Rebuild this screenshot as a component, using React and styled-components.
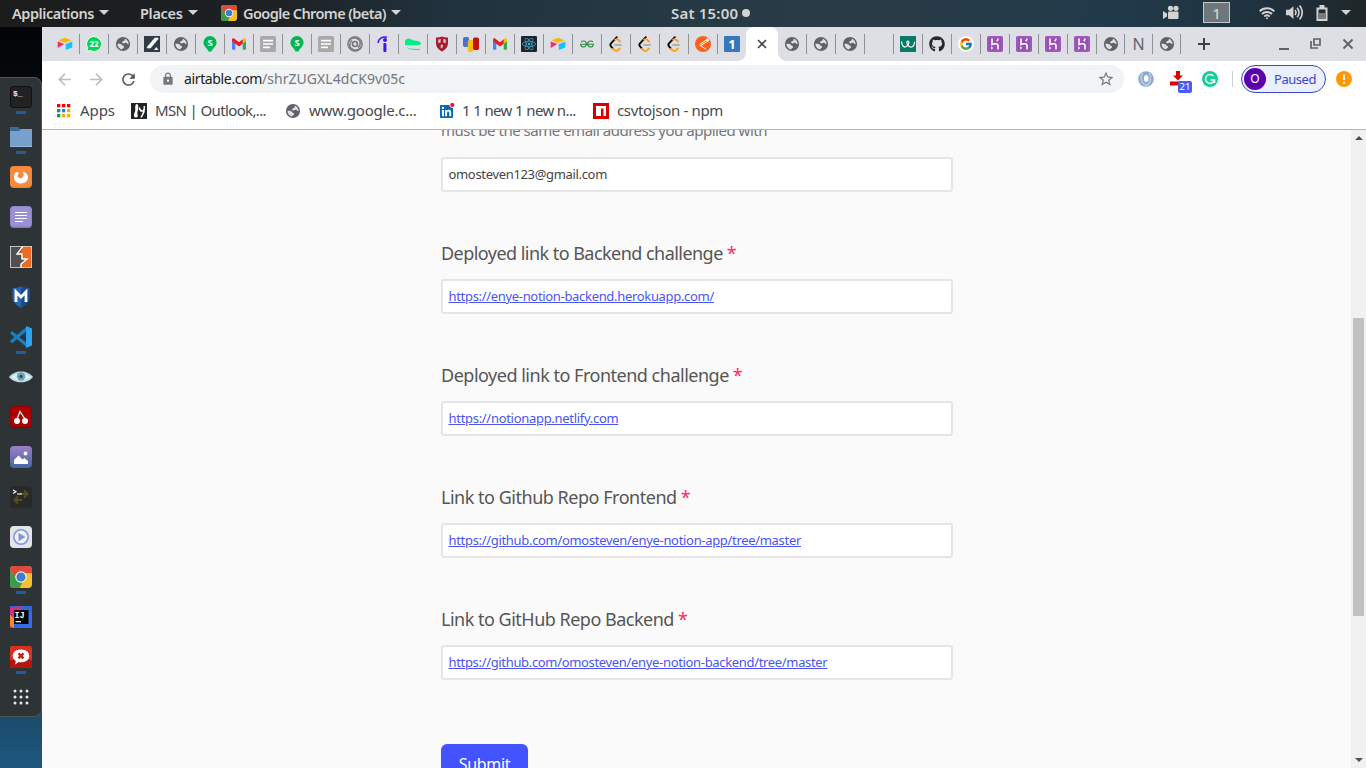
import React from 'react';
import styled, { createGlobalStyle } from 'styled-components';
import { MdLock, MdRefresh, MdStarBorder, MdArrowBack, MdArrowForward } from 'react-icons/md';
import { FaGithub, FaReact, FaLinkedin } from 'react-icons/fa';
import { FcGoogle } from 'react-icons/fc';
import { SiGeeksforgeeks } from 'react-icons/si';

const Global = createGlobalStyle`
  * { box-sizing: border-box; }
  html, body { margin: 0; height: 100%; overflow: hidden; }
  body { font-family: "Noto Sans", "Open Sans", sans-serif; background: #000; }
  svg { display: block; flex: none; }
`;

const Desktop = styled.div`
  width: 1366px;
  height: 768px;
  display: flex;
  flex-direction: column;
  overflow: hidden;
`;

const Text = styled.span`
  white-space: pre;
  letter-spacing: ${(p) => p.$ls || 0}px;
`;

/* ---------- top bar ---------- */
const TopBar = styled.header`
  height: 27px;
  flex: none;
  display: flex;
  align-items: center;
  padding-bottom: 2px;
  color: #d3d3d1;
  font-size: 14.5px;
  font-weight: 600;
  background: linear-gradient(100deg, #1c1c1c 0, #1d2124 270px, #20323e 440px, #263a45 700px, #293b46 860px, #213a4a 1100px, #1f3340 1230px, #202426 1366px);
`;
const TopMenu = styled.div`
  display: flex;
  align-items: center;
  gap: 6px;
  width: ${(p) => p.$w}px;
  padding-left: ${(p) => p.$pl || 0}px;
`;
const Caret = styled.i`
  border: 5px solid transparent;
  border-top-color: currentColor;
  border-bottom: 0;
  margin-left: ${(p) => p.$ml || 0}px;
`;
const Clock = styled.div`
  display: flex;
  align-items: center;
  gap: 4px;
  margin-left: 270px;
  flex: 1;
  font-size: 15px;
`;
const Dot = styled.i`
  width: 8px;
  height: 8px;
  border-radius: 50%;
  background: currentColor;
`;
const Tray = styled.div`
  display: flex;
  align-items: center;
  padding-right: 15px;
`;
const Workspace = styled.div`
  width: 27px;
  height: 21px;
  margin: 0 29px 0 24px;
  border: 1px solid #c4c8ca;
  background: #6d777c;
  display: flex;
  align-items: center;
  justify-content: center;
  font-weight: 500;
  font-size: 15px;
`;
const Status = styled.div`
  display: flex;
  align-items: center;
  gap: 11px;
`;

/* ---------- dock ---------- */
const Body = styled.div`
  flex: 1;
  display: flex;
  min-height: 0;
`;
const DockColumn = styled.aside`
  width: 42px;
  flex: none;
  padding-top: 50px;
  background: linear-gradient(#020507 0, #04080b 55px, #1c4c6b 690px, #1d5780 741px);
`;
const Dock = styled.nav`
  height: 640px;
  background: #2e3436;
  border: 1px solid #4e5355;
  border-left: 0;
  border-radius: 0 8px 8px 0;
  display: flex;
  flex-direction: column;
`;
const DockItem = styled.div`
  height: 40px;
  flex: none;
  padding-top: 8px;
  display: flex;
  flex-direction: column;
  align-items: center;
  gap: 3px;
`;
const Running = styled.i`
  width: 10px;
  height: 3px;
  background: #215d9c;
`;

/* ---------- browser ---------- */
const Browser = styled.main`
  flex: 1;
  min-width: 0;
  display: flex;
  flex-direction: column;
  background: #fff;
`;
const TabStrip = styled.div`
  height: 34px;
  flex: none;
  display: flex;
  align-items: center;
  padding-left: 9px;
  background: #dedfe5;
  color: #5f6368;
`;
const Tab = styled.div`
  width: ${(p) => p.$w || 29}px;
  height: 20px;
  flex: none;
  display: flex;
  align-items: center;
  justify-content: center;
  border-right: 1px solid ${(p) => (p.$last ? 'transparent' : '#8e9196')};
  font-size: 16px;
`;
const ActiveTab = styled.div`
  width: 32px;
  height: 34px;
  flex: none;
  margin-left: -1px;
  border-radius: 8px 8px 0 0;
  background: #fff;
  display: flex;
  align-items: center;
  justify-content: center;
  position: relative;
  &::before, &::after {
    content: '';
    position: absolute;
    bottom: 0;
    width: 8px;
    height: 8px;
  }
  &::before { left: -8px; background: radial-gradient(circle at 0 0, transparent 7.5px, #fff 8px); }
  &::after { right: -8px; background: radial-gradient(circle at 100% 0, transparent 7.5px, #fff 8px); }
`;
const NewTab = styled.div`
  width: 45px;
  display: flex;
  justify-content: center;
`;
const WindowButtons = styled.div`
  flex: 1;
  display: flex;
  align-items: center;
  justify-content: flex-end;
  padding-right: 12px;
  gap: 20px;
`;
const Toolbar = styled.div`
  height: 36px;
  flex: none;
  display: flex;
  align-items: center;
  color: #5f6368;
  padding-left: 13px;
`;
const NavButton = styled.div`
  width: 32px;
  display: flex;
  align-items: center;
  justify-content: flex-start;
  color: ${(p) => (p.$off ? '#babcbe' : '#53575b')};
`;
const Omnibox = styled.div`
  width: 974px;
  height: 28px;
  flex: none;
  margin-left: -1px;
  border-radius: 14px;
  background: #f1f3f4;
  display: flex;
  align-items: center;
  padding: 0 9px 0 11px;
  font-size: 14px;
  color: #74787c;
  svg:first-child { margin-right: 9px; }
  svg:last-child { margin-left: auto; }
  span, b { padding-bottom: 1px; }
  b { font-weight: 400; color: #202124; }
`;
const Extensions = styled.div`
  display: flex;
  align-items: center;
  padding-left: 14px;
  gap: 16px;
`;
const Badged = styled.div`
  position: relative;
`;
const Badge = styled.span`
  position: absolute;
  left: 8px;
  top: 10px;
  width: 14px;
  height: 12px;
  border-radius: 2px;
  background: #4a5af5;
  color: #fff;
  font-size: 9.5px;
  line-height: 12px;
  text-align: center;
`;
const Divider = styled.i`
  width: 1px;
  height: 16px;
  margin-left: 14px;
  background: #cdd0d3;
`;
const Profile = styled.div`
  width: 85px;
  height: 28px;
  margin: 0 10px 0 8px;
  border: 1px solid #3b48cf;
  border-radius: 14px;
  background: #e9effb;
  color: #3c46c8;
  display: flex;
  align-items: center;
  padding-left: 2px;
  gap: 8px;
  font-size: 13px;
`;
const Avatar = styled.span`
  width: 22px;
  height: 22px;
  border-radius: 50%;
  background: #5b00ab;
  color: #fff;
  font-size: 12px;
  line-height: 21px;
  text-align: center;
`;
const Bookmarks = styled.div`
  height: 33px;
  flex: none;
  display: flex;
  align-items: center;
  padding: 0 0 5px 15px;
  border-bottom: 1px solid #b6b6b6;
  font-size: 15px;
  color: #46494d;
  ${Text} { padding-bottom: 1px; }
`;
const Bookmark = styled.div`
  display: flex;
  align-items: center;
  gap: ${(p) => p.$gap || 8}px;
  width: ${(p) => p.$w}px;
`;

/* ---------- form ---------- */
const Page = styled.div`
  flex: 1;
  min-height: 0;
  display: flex;
  background: #fafafa;
`;
const Form = styled.section`
  flex: 1;
  height: 638px;
  overflow: hidden;
  padding-left: 399px;
`;
const Hint = styled.div`
  height: 27px;
  margin-top: -11px;
  margin-bottom: 11px;
  line-height: 22px;
  font-size: 15px;
  color: #757575;
`;
const Field = styled.div`
  width: 512px;
  padding-bottom: 44px;
`;
const Label = styled.div`
  height: 43px;
  line-height: 34px;
  font-size: 18px;
  color: #555;
`;
const Star = styled.span`
  color: #f82b60;
  margin-left: 4px;
`;
const Input = styled.div`
  height: 35px;
  border: 2px solid #e5e5e5;
  border-radius: 3px;
  background: #fff;
  padding-left: 5.5px;
  line-height: 31px;
  font-size: 13px;
  color: #444;
`;
const Link = styled(Text)`
  color: #4a55f0;
  text-decoration: underline;
`;
const Submit = styled.button`
  display: block;
  width: 87px;
  height: 40px;
  margin-top: 20px;
  padding: 0;
  border: 0;
  border-radius: 6px;
  background: #4353ff;
  color: #fff;
  font: 16px/38px "Noto Sans", sans-serif;
`;
const Scrollbar = styled.div`
  width: 15px;
  background: #f1f1f1;
  display: flex;
  flex-direction: column;
  align-items: center;
  justify-content: space-between;
  padding: 4px 0;
`;
const Thumb = styled.i`
  width: 11px;
  height: 298px;
  background: #c1c1c1;
  margin-bottom: -36px;
`;

/* ---------- icons ---------- */
const Svg = ({ s = 16, children, v = 16, ...r }) => (
  <svg width={s} height={s} viewBox={`0 0 ${v} ${v}`} {...r}>{children}</svg>
);
const Globe = () => (
  <Svg>
    <circle cx="8" cy="8" r="7.100" fill="#5f6368" />
    <path d="M9.800 2.700c1.800.6 3.100 2 3.600 3.800l.1 1.800c-1 .1-1.400-.6-1.800-1.200-.5-.6-1.400-.3-2 0-.9.500-2.200.4-2.500-.6-.2-.9.500-1.400 1.300-1.500.8-.1 1.200-.5 1.200-1.200z" fill="#dedfe5" />
    <path d="M2.400 7.800c1.500.2 3-.2 4.200.7.8.6.8 1.300 1.700 1.500.9.200 1 .9.600 1.500-.5.700-1.500.6-1.700 2-2.500-.3-4.700-2.500-4.800-5.700z" fill="#dedfe5" />
  </Svg>
);
const Airtable = () => (
  <Svg>
    <path d="M1.500 4.200 8 1.700l6.500 2.500L8 6.800z" fill="#fcb400" />
    <path d="M8.800 8 15.300 5.500v6L8.800 14z" fill="#18bfff" />
    <path d="M.7 5.600 7.200 8 .7 12z" fill="#f82b60" />
  </Svg>
);
const WhatsApp = () => (
  <Svg>
    <path d="M8 .3a7.700 7.700 0 1 1-3.800 14.400L.4 15.700l1-3.800A7.700 7.700 0 0 1 8 .3z" fill="#fff" />
    <path d="M8 1a7 7 0 1 1-3.700 12.900l-2.900.8.8-2.900A7 7 0 0 1 8 1z" fill="#00d757" />
    <text x="8" y="11" textAnchor="middle" fontSize="8" fontWeight="700" fill="#fff">22</text>
  </Svg>
);
const Pencil = () => (
  <Svg>
    <rect width="16" height="16" fill="#2f3c43" />
    <path d="M10.800 2h2.900c.6 0 .6.600.3 1L6.500 12H3.600c-.6 0-.7-.5-.4-.9z" fill="#fff" stroke="#fff" strokeWidth=".6" />
    <path d="M10 14 12.300 11l2.200 3z" fill="#fff" />
  </Svg>
);
const SPin = () => (
  <Svg>
    <path d="M8 0a6.600 6.600 0 0 1 6.600 6.600C14.600 10.500 10.600 12.500 9.500 15.400H6.500C5.400 12.500 1.400 10.500 1.400 6.600A6.600 6.600 0 0 1 8 0z" fill="#00b851" />
    <text x="8" y="9.800" textAnchor="middle" fontSize="9.500" fontWeight="700" fill="#fff">S</text>
  </Svg>
);
const Gmail = () => (
  <Svg>
    <path d="M1 3.500 4.300 6v7.700H2a1 1 0 0 1-1-1z" fill="#4285f4" />
    <path d="M15 3.500 11.700 6v7.700H14a1 1 0 0 0 1-1z" fill="#34a853" />
    <path d="M11.700 3.300 13 2.500c1-.6 2 .1 2 1.200v1.500l-3.300 2.500z" fill="#fbbc04" />
    <path d="M1 3.700C1 2.500 2.200 1.900 3.100 2.600L8 6.200l3.700-2.900v4.400L8 10.400 1 5.200z" fill="#ea1c2c" />
  </Svg>
);
const Doc = () => (
  <Svg>
    <rect width="16" height="16" rx="1.500" fill="#a9a9a9" />
    <path d="M3 4.700h10M3 8h10M3 11.300h7" stroke="#fff" strokeWidth="1.700" />
  </Svg>
);
const Swirl = () => (
  <Svg fill="none" stroke="#777">
    <circle cx="8" cy="8" r="7" strokeWidth="1.800" stroke="#888" />
    <path d="M2 5a6 5 20 0 1 10-1M14 11a6 5 20 0 1-10 1M11 2.500c3 2 3 7 0 9M5 13.500c-3-2-3-7 0-9" strokeWidth="1.500" />
    <circle cx="8" cy="8" r="2.500" strokeWidth="1.600" />
  </Svg>
);
const Indeed = () => (
  <Svg>
    <circle cx="9" cy="4" r="2" fill="#4310ee" />
    <rect x="7.400" y="7" width="3" height="9" rx="1" fill="#4310ee" />
    <path d="M2 7C2.500 3 6 0 11 1.200" fill="none" stroke="#4310ee" strokeWidth="1.500" />
  </Svg>
);
const Croc = () => (
  <Svg>
    <path d="M0 8.800V5C1 2.500 4 2 6 3.200c2 1.300 4 1.300 6.500 1.800 2.500.5 3.500 1.500 3.500 3 0 1-4 1.300-8 1.300S1 9.500 0 8.800z" fill="#00ef85" />
    <path d="M1 11c4 2 9 2.200 14 1.700v1c-5 .8-10 .3-14-2.700z" fill="#00ef85" />
  </Svg>
);
const Shield = () => (
  <Svg>
    <path d="M2 1.500c2 0 4-.2 6-1 2 .8 4 1 6 1V7c0 4-2.500 6.500-6 8.500C4.500 13.500 2 11 2 7z" fill="#a51c30" />
    <path d="M4.200 3.500v3.700l2.500-.6V3zM9.300 3v3.600l2.500.6V3.500zM6.700 9v3.600L9 11V8.500z" fill="#e3b9be" />
    <path d="M3 9 8 6.500 13 9" stroke="#a51c30" fill="none" />
  </Svg>
);
const Bars = () => (
  <Svg>
    <rect x="0" y="1" width="6" height="10" rx="1.800" fill="#4872cb" />
    <rect x="4.800" y="4" width="5.400" height="12" rx="1.800" fill="#fdbb12" />
    <rect x="10" y="1.500" width="6" height="12.500" rx="1.800" fill="#c3120c" />
  </Svg>
);
const ReactIcon = () => (
  <Svg>
    <rect width="16" height="16" rx="1" fill="#20232a" />
    <FaReact x="1" y="1" size={14} color="#43b6d6" />
  </Svg>
);
const Leet = () => (
  <Svg fill="none" strokeLinecap="round" strokeWidth="1.900">
    <path d="M7 9h6" stroke="#b3b1b0" />
    <path d="M8.800 1.200 3 7.300c-.8.900-.8 2.200 0 3.100l2 2.200" stroke="#070706" />
    <path d="M5 12.600 6.600 14.200c1 .9 2.500.9 3.500 0l1.700-1.700M12 5.500l-1.800-1.700c-.9-.8-2.100-.8-3-.2" stroke="#ffa116" />
  </Svg>
);
const Postman = () => (
  <Svg>
    <circle cx="8" cy="8" r="8" fill="#ff6118" />
    <path d="M12 3.500 5 8.300M12.800 5 6 9.500M4.500 9l6.500 4.300" stroke="#fff" strokeWidth="1" fill="none" />
    <circle cx="12.600" cy="3.900" r="1.600" fill="#fff" />
  </Svg>
);
const One = () => (
  <Svg>
    <rect width="16" height="16" rx="1" fill="#3578c0" />
    <text x="8" y="12.800" textAnchor="middle" fontSize="13" fontWeight="700" fill="#fff">1</text>
  </Svg>
);
const Wave = () => (
  <Svg>
    <rect width="16" height="16" fill="#087a68" />
    <path d="M1.500 5.500c.3 3.500 1.800 5.800 3.800 5.500 2-.4 3.500-2.800 3.600-4.600 0-1.900-2.100-1.900-2 0 .1 2 1.600 4.300 3.600 4.600 2.200.3 4-1.700 4.100-5.300" fill="none" stroke="#fff" strokeWidth="1.200" />
  </Svg>
);
const GoogleIcon = () => (
  <Svg>
    <circle cx="8" cy="8" r="8" fill="#fff" />
    <FcGoogle x="1" y="1" size={14} />
  </Svg>
);
const Heroku = () => (
  <Svg>
    <rect width="16" height="16" rx="2" fill="#9850b5" />
    <rect x="1" y="1" width="14" height="14" rx="1.500" fill="none" stroke="#a564c0" strokeWidth=".8" />
    <path d="M5 2.500v6c2-1 6-1.500 6 1v4M11 2.500c0 1.200-.5 2-1.300 2.800" fill="none" stroke="#fff" strokeWidth="1.600" />
    <path d="M4.200 10.200v3.600l2-1.800z" fill="#fff" />
  </Svg>
);
const Chrome = ({ s = 16 }) => (
  <Svg s={s} v={24}>
    <clipPath id={`c${s}`}><rect width="24" height="24" rx="4" /></clipPath>
    <g clipPath={`url(#c${s})`}>
      <rect width="24" height="24" fill="#f5c02c" />
      <path d="M0 0h24v8H12L7 14 0 5z" fill="#dc4a3c" />
      <path d="M0 4.500 7.500 14.500 14 17l-3.500 7H0z" fill="#3f9b4c" />
      <circle cx="12" cy="12" r="6.300" fill="#f3f3f3" />
      <circle cx="12" cy="12" r="5" fill="#3f7fc6" />
    </g>
  </Svg>
);
const gridColors = ['#f00', '#f00', '#f00', '#00a15a', '#2a7bf0', '#fbab00', '#00a15a', '#fbab00', '#fbab00'];
const AppsGrid = () => (
  <Svg s={14} v={14}>
    {gridColors.map((c, i) => (
      <rect key={i} x={(i % 3) * 5} y={Math.floor(i / 3) * 5} width="3.300" height="3.300" fill={c} />
    ))}
  </Svg>
);
const Msn = () => (
  <Svg>
    <rect width="16" height="16" fill="#202427" />
    <path d="M5.500 1c2.500 0 2 5 1 8-.7 2 .7 3 .2 4.500-.6 1.500-3.200 1.300-3.700-.5-.4-2.500 1.500-4 1.300-6.500C4.200 4 4 1.500 5.500 1z" fill="#fff" />
    <path d="M8.500 4.500c0 2.500 1.500 4 3 3.500s2-3 1.800-5M13.300 5c.5 4-1.500 6-3.300 9.500" stroke="#fff" strokeWidth="1.500" fill="none" />
  </Svg>
);
const LinkedIn = () => (
  <Svg>
    <FaLinkedin x="0" y="1" size={15} color="#0a66b7" />
    <circle cx="13.200" cy="2" r="2.700" fill="#fff" />
    <circle cx="13.300" cy="2" r="2.100" fill="#f5112e" />
  </Svg>
);
const Npm = () => (
  <Svg>
    <rect width="16" height="16" fill="#d80000" />
    <path d="M3 3h10v10h-2.500V5.500H8V13H3z" fill="#fff" />
  </Svg>
);

const Terminal = () => (
  <Svg s={22} v={22}>
    <rect width="22" height="22" rx="4" fill="#191919" />
    <rect x=".5" y=".5" width="21" height="21" rx="3.500" fill="#222" stroke="#111" />
    <text x="3" y="9.500" fontSize="8" fontWeight="700" fill="#eee" fontFamily="Liberation Mono">$_</text>
  </Svg>
);
const Folder = () => (
  <Svg s={22} v={22}>
    <path d="M0 1h8l2 2h12v17H0z" fill="#3b6b94" />
    <path d="M0 5h9l2-2h11v18H0z" fill="#77a0cc" />
    <path d="M0 20h22v1H0z" fill="#9ab9da" />
  </Svg>
);
const Firefox = () => (
  <Svg s={22} v={22}>
    <rect width="22" height="22" rx="4" fill="#ef7f31" />
    <rect x=".5" y=".5" width="21" height="20" rx="3.500" fill="#f68b3e" />
    <path d="M6 5.500c.8 1 1.800 1.300 3.300 1.300-.3 1.200-2 1.500-1.800 3 .3 1.800 2.500 3 4.500 2 2.200-1.200 2.500-4 .3-6 3.700.3 5.700 3 5.700 5.500 0 3.700-3 6.200-7 6.200s-7-2.700-7-6.300C4 8.800 5 7.300 6 5.500z" fill="#fff" />
  </Svg>
);
const Notes = () => (
  <Svg s={22} v={22}>
    <rect width="22" height="22" rx="4" fill="#8579c0" />
    <rect x=".5" y=".5" width="21" height="20" rx="3.500" fill="#9c90d4" />
    <path d="M5 6.500h12M5 9.500h12M5 12.500h12M5 15.500h8" stroke="#fff" strokeWidth="1.200" />
  </Svg>
);
const Burp = () => (
  <Svg s={22} v={22}>
    <rect width="22" height="22" fill="#505050" />
    <path d="M11 0h11v22H11v-4l5-4-5-2V8L7 10l5-6z" fill="#ee6a22" />
    <path d="M13 0 7 8h5v5h5l-6 5v4" fill="none" stroke="#fff" strokeWidth="1.400" />
    <rect x=".5" y=".5" width="21" height="21" fill="none" stroke="#ddd" strokeWidth=".8" />
  </Svg>
);
const Metasploit = () => (
  <Svg s={22} v={22}>
    <path d="M2.500 2c3 0 6-.5 8.500-1.800C13.500 1.500 16.500 2 19.500 2v9c0 5-4 8-8.500 11-4.500-3-8.500-6-8.500-11z" fill="#2866ad" />
    <path d="M11 .2C13.500 1.500 16.500 2 19.500 2v9c0 5-4 8-8.500 11z" fill="#1b4c8c" />
    <path d="M6 16V6l5 5 5-5v10" fill="none" stroke="#fff" strokeWidth="2.800" />
  </Svg>
);
const VsCode = () => (
  <Svg s={22} v={22}>
    <path d="M2 7 16 18.500M2 15.200 16 3.500" stroke="#1580c8" strokeWidth="3.200" strokeLinecap="round" />
    <path d="m16 0 6 2.500v17L16 22z" fill="#2fa3ee" />
    <path d="M16 6.500 10 11l6 4.500z" fill="#2e3436" />
  </Svg>
);
const Eye = () => (
  <Svg s={24} v={24}>
    <path d="M0 11C5 3.500 19 3.500 24 11 19 18 5 18 0 11z" fill="#b4dbe5" />
    <path d="M2 11C7 6.500 17 6.500 22 11 17 15.500 7 15.500 2 11z" fill="#dff1f5" />
    <circle cx="12" cy="10.500" r="4.200" fill="#6fa3b5" />
    <circle cx="12" cy="10.500" r="1.700" fill="#2e5362" />
  </Svg>
);
const Cherry = () => (
  <Svg s={22} v={22}>
    <rect width="22" height="22" rx="4" fill="#8d0000" />
    <rect x=".7" y=".7" width="20.600" height="20" rx="3.500" fill="#ab0303" />
    <path d="M7 13 10 5.500 15 13" fill="none" stroke="#fff" strokeWidth="1.200" />
    <circle cx="7" cy="15" r="3" fill="#fff" />
    <circle cx="15" cy="15" r="3" fill="#fff" />
  </Svg>
);
const Photo = () => (
  <Svg s={22} v={22}>
    <defs><linearGradient id="ph" x2="0" y2="1"><stop stopColor="#9d7fc6" /><stop offset="1" stopColor="#4367a3" /></linearGradient></defs>
    <rect width="22" height="22" rx="4" fill="url(#ph)" />
    <circle cx="15.500" cy="7.500" r="1.900" fill="#fff" />
    <path d="M4 18v-4l4.500-4.500 4 4L14.500 12 18 15v3z" fill="#fff" />
  </Svg>
);
const Terminator = () => (
  <Svg s={22} v={22}>
    <rect width="22" height="22" rx="4" fill="#292929" />
    <path d="M9 8h8M14 4.500 17.500 8 14 11.500M12 14H4M8 10.500 4.500 14 8 17.500" fill="none" stroke="#57501e" strokeWidth="1.900" />
    <path d="m3 4 3 1.700L3 7.400M7 8h5" fill="none" stroke="#fff" strokeWidth="1.100" />
  </Svg>
);
const Player = () => (
  <Svg s={22} v={22}>
    <rect width="22" height="22" rx="4" fill="#e4e4e8" />
    <circle cx="11" cy="11" r="7.200" fill="#eef0fb" stroke="#7c9ade" strokeWidth="1.600" />
    <path d="M8.500 6.800 15.500 11l-7 4.200z" fill="#8994d6" />
  </Svg>
);
const IntelliJ = () => (
  <Svg s={22} v={22}>
    <rect width="22" height="22" fill="#2b68dc" />
    <path d="M0 2 11 0l3 8L0 22z" fill="#d72c86" />
    <path d="M0 9 4 12v10L0 20z" fill="#f28a2e" />
    <path d="M22 6v16H6l10-12z" fill="#386be8" />
    <rect x="4" y="4" width="14.500" height="14" fill="#050505" />
    <text x="4.500" y="11.500" fontSize="8.500" fontWeight="700" fill="#fff" fontFamily="Liberation Mono">IJ</text>
    <path d="M5.500 15.700h5.500" stroke="#fff" strokeWidth="1.200" />
  </Svg>
);
const Chat = () => (
  <Svg s={22} v={22}>
    <rect width="22" height="22" rx="2" fill="#d9301f" />
    <path d="M0 14h22v6a2 2 0 0 1-2 2H2a2 2 0 0 1-2-2z" fill="#b3160f" />
    <path d="M11 3.500c5 0 8.300 2.800 8.300 6.500S16 16.300 11 16.300c-.8 0-1.500 0-2.200-.2L5 18.500l.8-3.500C4 13.800 2.700 12 2.700 10 2.700 6.300 6 3.500 11 3.500z" fill="#fff" />
    <path d="m8.500 7.300 5 5m0-5-5 5" stroke="#c92018" strokeWidth="2.400" />
  </Svg>
);
const Launcher = () => (
  <Svg s={22} v={22}>
    {[0, 1, 2, 3, 4, 5, 6, 7, 8].map((i) => (
      <circle key={i} cx={5 + (i % 3) * 6} cy={5 + Math.floor(i / 3) * 6} r="1.500" fill="#e8e8e6" />
    ))}
  </Svg>
);

const dock = [
  [Terminal, 1], [Folder, 1], [Firefox], [Notes], [Burp], [Metasploit], [VsCode, 1], [Eye],
  [Cherry], [Photo], [Terminator], [Player], [Chrome, 1], [IntelliJ], [Chat, 1], [Launcher],
];
const Gfg = () => <SiGeeksforgeeks size={14} color="#2f8d46" />;
const Github = () => <FaGithub size={16} color="#24292e" />;
const Letter = () => <Text>N</Text>;
const Blank = () => null;
const leftTabs = [Airtable, WhatsApp, Globe, Pencil, Globe, SPin, Gmail, Doc, SPin, Doc, Swirl, Indeed, Croc, Shield, Bars, Gmail, ReactIcon, Airtable, Gfg, Leet, Leet, Leet, Postman, One];
const rightTabs = [[Globe], [Globe], [Globe], [Blank], [Wave], [Github], [GoogleIcon], [Heroku], [Heroku], [Heroku], [Heroku], [Globe, 28], [Letter, 28], [Globe, 28]];

const fields = [
  ['Deployed link to Backend challenge', -0.54, 'https://enye-notion-backend.herokuapp.com/', -0.32],
  ['Deployed link to Frontend challenge', -0.49, 'https://notionapp.netlify.com', -0.3],
  ['Link to Github Repo Frontend', -0.48, 'https://github.com/omosteven/enye-notion-app/tree/master', -0.317],
  ['Link to GitHub Repo Backend', -0.5, 'https://github.com/omosteven/enye-notion-backend/tree/master', -0.331],
];

export default function App() {
  return (
    <Desktop>
      <Global />
      <TopBar>
        <TopMenu $w={140} $pl={12}><Text $ls={-0.434}>Applications</Text><Caret $ml={-1} /></TopMenu>
        <TopMenu $w={81}><Text $ls={-0.32}>Places</Text><Caret $ml={-1} /></TopMenu>
        <TopMenu $w={180}><Chrome /><Text $ls={-0.591}>Google Chrome (beta)</Text><Caret $ml={-1} /></TopMenu>
        <Clock><Text $ls={0.19}>Sat 15:00</Text><Dot /></Clock>
        <Tray>
          <Svg s={16} fill="#d3d3d1">
            <circle cx="7.500" cy="3.300" r="2.600" /><circle cx="13" cy="3.300" r="2.600" />
            <rect x="5" y="6.500" width="10.500" height="7.500" rx="1" /><path d="M0 6l4 2.500v3L0 14z" />
          </Svg>
          <Workspace>1</Workspace>
          <Status>
            <Svg s={16} fill="none" stroke="#d3d3d1" strokeWidth="1.900">
              <path d="M.7 6.200a10.500 10.500 0 0 1 14.600 0M3 9a7.200 7.200 0 0 1 10 0M5.300 11.500a4 4 0 0 1 5.400 0" />
              <circle cx="8" cy="13.300" r="1" fill="#d3d3d1" stroke="none" />
            </Svg>
            <Svg s={17} fill="none" stroke="#d3d3d1" strokeWidth="1.500">
              <path d="M0 5.500h3L7 2v12l-4-3.500H0z" fill="#d3d3d1" stroke="none" />
              <path d="M8.500 5.500q1.800 2.500 0 5M10.500 3.500q3.500 4.500 0 9M12.800 1.500q5 6.500 0 13" />
            </Svg>
            <Svg s={16}>
              <path d="M3.500 3.500h9v11.500h-9z" fill="none" stroke="#d3d3d1" strokeWidth="2" />
              <path d="M5.500 0h5v3h-5z" fill="#d3d3d1" /><path d="M4.500 8h7v6h-7z" fill="#777c7e" />
            </Svg>
            <Caret />
          </Status>
        </Tray>
      </TopBar>
      <Body>
        <DockColumn>
          <Dock>
            {dock.map(([Icon, on], i) => (
              <DockItem key={i}><Icon s={22} />{on && <Running />}</DockItem>
            ))}
          </Dock>
        </DockColumn>
        <Browser>
          <TabStrip>
            {leftTabs.map((Icon, i) => <Tab key={i} $last={i === 23}><Icon /></Tab>)}
            <ActiveTab><Svg s={10} v={10}><path d="m1 1 8 8m0-8-8 8" stroke="#45494d" strokeWidth="1.700" /></Svg></ActiveTab>
            {rightTabs.map(([Icon, w], i) => <Tab key={i} $w={w}><Icon /></Tab>)}
            <NewTab><Svg s={12} v={12}><path d="M6 0v12M0 6h12" stroke="#3c4043" strokeWidth="2" /></Svg></NewTab>
            <WindowButtons>
              <Svg s={12} v={12}><path d="M1 11h10" stroke="#5f6368" strokeWidth="2" /></Svg>
              <Svg s={12} v={12} fill="none" stroke="#5f6368" strokeWidth="1.700"><path d="M4 1h6v6H4zM1 3v7h7" /></Svg>
              <Svg s={12} v={12} stroke="#5f6368" strokeWidth="1.900"><path d="m1.500 1.500 9 9m0-9-9 9" /></Svg>
            </WindowButtons>
          </TabStrip>
          <Toolbar>
            <NavButton $off><MdArrowBack size={19} /></NavButton>
            <NavButton $off><MdArrowForward size={19} /></NavButton>
            <NavButton><MdRefresh size={19} /></NavButton>
            <Omnibox>
              <MdLock size={14} />
              <Text as="b" $ls={-0.359}>airtable.com</Text><Text $ls={0.04}>/shrZUGXL4dCK9v05c</Text>
              <MdStarBorder size={18} />
            </Omnibox>
            <Extensions>
              <Svg><circle cx="8" cy="8" r="7.800" fill="#8ba9ce" /><path d="M5 2C1 7 4 14 9 14M11 2c3 4 2 10-2 12" fill="none" stroke="#b4c9e2" strokeWidth="1.800" /><ellipse cx="8.200" cy="7.500" rx="2.300" ry="3.600" fill="#fff" /></Svg>
              <Badged>
                <Svg><path d="M6 0h4v4.500h3L8 9.500 3 4.500h3zM0 10.500h16v4H0z" fill="#e00000" /></Svg>
                <Badge>21</Badge>
              </Badged>
              <Svg><circle cx="8" cy="8" r="8" fill="#11ce9d" /><path d="M11.500 5A4.500 4.500 0 1 0 12.400 9H8.500M12.500 9v3" fill="none" stroke="#fff" strokeWidth="1.500" /></Svg>
            </Extensions>
            <Divider />
            <Profile><Avatar>O</Avatar><Text $ls={-0.458}>Paused</Text></Profile>
            <Svg><circle cx="8" cy="8" r="8" fill="#ff9800" /><path d="M8 3.500v5.500M8 10.700v2" stroke="#fff" strokeWidth="1.900" /></Svg>
          </Toolbar>
          <Bookmarks>
            <Bookmark $w={74} $gap={9}><AppsGrid /><Text $ls={-0.059}>Apps</Text></Bookmark>
            <Bookmark $w={154}><Msn /><Text $ls={-0.637}>MSN | Outlook,...</Text></Bookmark>
            <Bookmark $w={154}><Globe /><Text $ls={-0.234}>www.google.c...</Text></Bookmark>
            <Bookmark $w={154} $gap={7}><LinkedIn /><Text $ls={-0.63}>1 1 new 1 new n...</Text></Bookmark>
            <Bookmark><Npm /><Text $ls={-0.336}>csvtojson - npm</Text></Bookmark>
          </Bookmarks>
          <Page>
            <Form>
              <Hint><Text $ls={-0.487}>must be the same email address you applied with</Text></Hint>
              <Field><Input><Text $ls={-0.33}>omosteven123@gmail.com</Text></Input></Field>
              {fields.map(([label, labelSpacing, url, urlSpacing]) => (
                <Field key={label}>
                  <Label><Text $ls={labelSpacing}>{label}</Text><Star>*</Star></Label>
                  <Input><Link $ls={urlSpacing}>{url}</Link></Input>
                </Field>
              ))}
              <Submit><Text $ls={-0.315}>Submit</Text></Submit>
            </Form>
            <Scrollbar>
              <Svg s={8} v={8}><path d="M0 6h8L4 2z" fill="#505050" /></Svg>
              <Thumb />
              <Svg s={8} v={8}><path d="M0 2h8L4 6z" fill="#505050" /></Svg>
            </Scrollbar>
          </Page>
        </Browser>
      </Body>
    </Desktop>
  );
}
